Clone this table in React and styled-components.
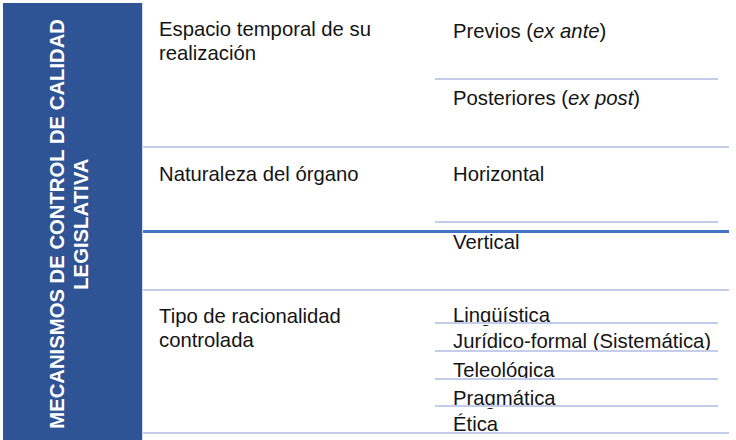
import React from "react";
import styled, { createGlobalStyle } from "styled-components";

const Global = createGlobalStyle`
  html, body { margin: 0; padding: 0; background: #ffffff; }
  body { font-family: "Liberation Sans", Arial, sans-serif; color: #141414; }
  * { box-sizing: border-box; }
`;

const Page = styled.div`
  padding: 3px 0 0 3px;
  width: 736px;
  height: 440px;
  overflow: hidden;
`;

const Table = styled.div`
  display: flex;
  width: 726px;
`;

const Sidebar = styled.div`
  width: 140px;
  flex: none;
  background: #2f5496;
  border-right: 1px solid #d3daea;
  display: flex;
  align-items: center;
  justify-content: center;
  padding-right: 8px;
`;

const VerticalTitle = styled.div`
  writing-mode: vertical-rl;
  transform: rotate(180deg);
  color: #ffffff;
  font-weight: 700;
  font-size: 20.3px;
  line-height: 24px;
  text-align: center;
  white-space: nowrap;
`;

const Body = styled.div`
  flex: 1;
  display: flex;
  flex-direction: column;
  padding-bottom: 10px;
`;

const Group = styled.div`
  position: relative;
  display: flex;
  height: ${(p) => p.$h}px;
  border-bottom: 2px solid #c3cce8;
`;

const Label = styled.div`
  width: 292px;
  flex: none;
  padding: ${(p) => p.$top}px 20px 0 16px;
  font-size: 20.3px;
  line-height: 24px;
`;

const Options = styled.div`
  flex: 1;
  display: flex;
  flex-direction: column;
`;

const Option = styled.div`
  position: relative;
  height: ${(p) => p.$h}px;
  flex: none;
  margin-right: 11px;
  padding: ${(p) => p.$top}px 0 0 18px;
  font-size: 20.3px;
  line-height: 24px;
  white-space: nowrap;

  &::after {
    content: "";
    display: ${(p) => (p.$last ? "none" : "block")};
    position: absolute;
    left: 0;
    right: 0;
    bottom: 0;
    height: 2px;
    background: #c3cce8;
    box-shadow: 0 1px 0 #ffffff;
  }
`;

const Em = styled.i`
  font-style: italic;
`;

const Rule = styled.div`
  position: absolute;
  left: 0;
  right: 0;
  top: ${(p) => p.$top}px;
  height: 3px;
  background: #4472c4;
`;

export default function App() {
  return (
    <>
      <Global />
      <Page>
        <Table>
          <Sidebar>
            <VerticalTitle>
              MECANISMOS DE CONTROL DE CALIDAD
              <br />
              LEGISLATIVA
            </VerticalTitle>
          </Sidebar>
          <Body>
            <Group $h={145}>
              <Label $top={14}>Espacio temporal de su realización</Label>
              <Options>
                <Option $h={77} $top={15.5}>
                  Previos (<Em>ex ante</Em>)
                </Option>
                <Option $h={66} $top={5.5} $last>
                  Posteriores (<Em>ex post</Em>)
                </Option>
              </Options>
            </Group>
            <Group $h={143}>
              <Label $top={13.5}>Naturaleza del órgano</Label>
              <Options>
                <Option $h={75} $top={13.5}>Horizontal</Option>
                <Option $h={66} $top={6.5} $last>Vertical</Option>
              </Options>
              <Rule $top={82} />
            </Group>
            <Group $h={143}>
              <Label $top={12.5}>Tipo de racionalidad controlada</Label>
              <Options>
                <Option $h={33} $top={11.5}>Lingüística</Option>
                <Option $h={28} $top={4.5}>Jurídico-formal (Sistemática)</Option>
                <Option $h={28} $top={5.5}>Teleológica</Option>
                <Option $h={27} $top={5.5}>Pragmática</Option>
                <Option $h={25} $top={5} $last>Ética</Option>
              </Options>
            </Group>
          </Body>
        </Table>
      </Page>
    </>
  );
}
